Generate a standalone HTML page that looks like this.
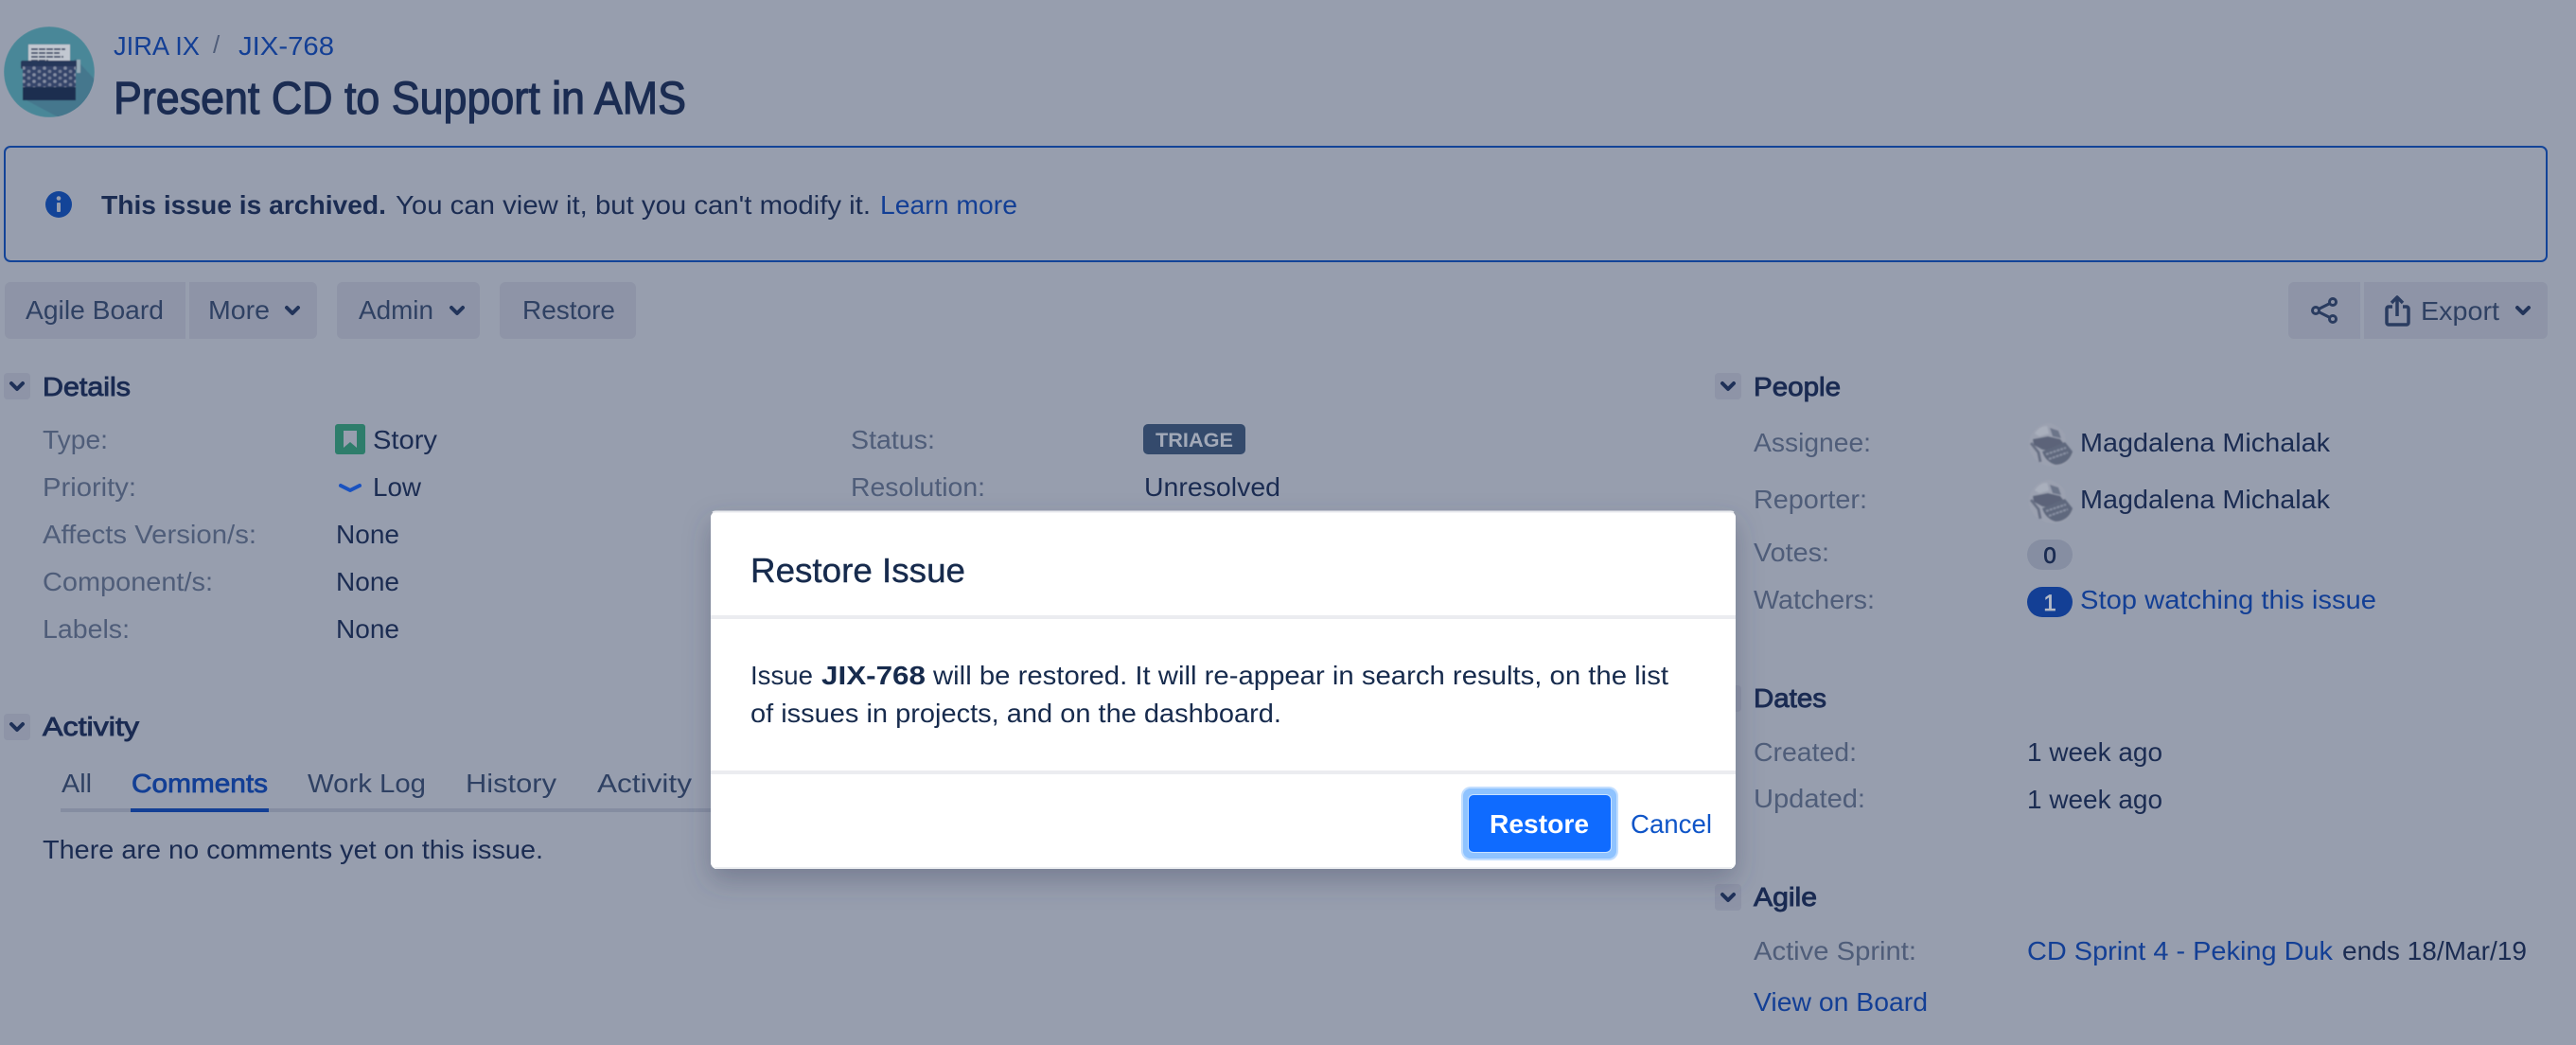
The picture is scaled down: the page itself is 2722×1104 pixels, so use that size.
<!DOCTYPE html>
<html lang="en">
<head>
<meta charset="utf-8">
<title>JIX-768 Present CD to Support in AMS</title>
<style>
html,body{margin:0;padding:0;width:2722px;height:1104px;overflow:hidden;background:#979eae}
svg{display:block}
text{font-family:"Liberation Sans",Arial,sans-serif;font-size:28px;fill:#1b2c52;white-space:pre}
.b{font-weight:700}
.l{fill:#4f5d79}
.a{fill:#133f95}
.t{fill:#2f4163}
.h{fill:#1a2b52;stroke:#1a2b52;stroke-width:.9}
.m{fill:#172b4d}
</style>
</head>
<body>
<svg xmlns="http://www.w3.org/2000/svg" width="2722" height="1104" viewBox="0 0 2722 1104">
<defs>
<filter id="blur1" x="-10%" y="-10%" width="120%" height="120%"><feGaussianBlur stdDeviation="0.9"/></filter>
<filter id="blur2" x="-10%" y="-10%" width="120%" height="120%"><feGaussianBlur stdDeviation="0.6"/></filter>
<filter id="shadow" x="-10%" y="-20%" width="120%" height="150%"><feDropShadow dx="0" dy="12" stdDeviation="14" flood-color="#3c4763" flood-opacity=".38"/></filter>
<pattern id="keys" width="11" height="7" patternUnits="userSpaceOnUse"><rect width="11" height="7" fill="#34456a"/><circle cx="3" cy="2" r="1.800" fill="#838da3"/><circle cx="8.500" cy="5.500" r="1.800" fill="#737e96"/></pattern>
<clipPath id="ava"><circle cx="52" cy="76" r="48"/></clipPath>
<g id="smallava" filter="url(#blur1)">
<path d="M2 26C1 12 12 1 24 1c8 3 12 5 16 12l1 10 7 9c-1 9-9 15-19 15C18 47 4 40 2 26z" fill="#9ba1b0"/>
<path d="M6 18l16-3 13 3 7 9-11 4-15-2-9-5z" fill="#5b6479"/>
<path d="M24 6l9 3 3 8-9-2z" fill="#6c7489"/>
<path d="M8 12c3-5 8-8 13-8l2 8-10 3z" fill="#a9afbc"/>
<path d="M16 31l24-10 8 10c-2 8-9 14-18 14-7-2-12-7-14-14z" fill="#5f687d"/>
<path d="M20 34l21-7M23 39l20-7" stroke="#8a92a4" stroke-width="2" stroke-dasharray="3 1" fill="none"/>
<path d="M4 22l8 10 2 10" stroke="#676f84" stroke-width="3" fill="none"/>
</g>
</defs>

<rect width="2722" height="1104" fill="#979eae"/>

<!-- project avatar -->
<g clip-path="url(#ava)" filter="url(#blur2)">
<circle cx="52" cy="76" r="48" fill="#4a8798"/>
<path d="M80 62L100 84V124H62L28 106z" fill="#44778d"/>
<rect x="30" y="47" width="44" height="22" fill="#c2c8d1"/>
<path d="M33 52h36M33 56h30M33 60h34M33 64h18" stroke="#4b5670" stroke-width="2" stroke-dasharray="7 1"/>
<rect x="38" y="64" width="28" height="6" fill="#d2d6dd"/>
<rect x="22" y="64" width="60" height="9" rx="2" fill="#27395a"/>
<rect x="24" y="70" width="56" height="23" fill="url(#keys)"/>
<rect x="24" y="92" width="56" height="14" fill="#1f2e50"/>
<rect x="81" y="63" width="4" height="14" fill="#94a9b6"/>
</g>

<!-- breadcrumbs and title -->
<text class="a" x="120" y="58" textLength="91" lengthAdjust="spacingAndGlyphs">JIRA IX</text>
<text class="l" x="225" y="56" style="font-size:26px">/</text>
<text class="a" x="252" y="58" textLength="101" lengthAdjust="spacingAndGlyphs">JIX-768</text>
<text x="120" y="120" style="font-size:48px;stroke:#1b2c52;stroke-width:1.200" textLength="605" lengthAdjust="spacingAndGlyphs">Present CD to Support in AMS</text>

<!-- banner -->
<rect x="5" y="155" width="2686" height="121" rx="6" fill="none" stroke="#134498" stroke-width="2"/>
<circle cx="62" cy="216" r="14" fill="#134498"/>
<rect x="60" y="214" width="4" height="10" rx="1" fill="#979eae"/>
<circle cx="62" cy="209.500" r="2.300" fill="#979eae"/>
<text class="b" x="107" y="226" textLength="301" lengthAdjust="spacingAndGlyphs">This issue is archived.</text>
<text x="418" y="226" textLength="502" lengthAdjust="spacingAndGlyphs">You can view it, but you can't modify it.</text>
<text class="a" x="930" y="226" textLength="145" lengthAdjust="spacingAndGlyphs">Learn more</text>

<!-- toolbar -->
<g fill="#8e94a7">
<path d="M11 298H196V358H11a6 6 0 0 1-6-6V304a6 6 0 0 1 6-6z"/>
<path d="M200 298H329a6 6 0 0 1 6 6V352a6 6 0 0 1-6 6H200z"/>
<rect x="356" y="298" width="151" height="60" rx="6"/>
<rect x="528" y="298" width="144" height="60" rx="6"/>
<path d="M2424 298H2494V358H2424a6 6 0 0 1-6-6V304a6 6 0 0 1 6-6z"/>
<path d="M2498 298H2686a6 6 0 0 1 6 6V352a6 6 0 0 1-6 6H2498z"/>
</g>
<text class="t" x="27" y="337" textLength="146" lengthAdjust="spacingAndGlyphs">Agile Board</text>
<text class="t" x="220" y="337" textLength="65" lengthAdjust="spacingAndGlyphs">More</text>
<path d="M303 325l6 6 6-6" fill="none" stroke="#22345a" stroke-width="4" stroke-linecap="round" stroke-linejoin="round"/>
<text class="t" x="379" y="337" textLength="79" lengthAdjust="spacingAndGlyphs">Admin</text>
<path d="M477 325l6 6 6-6" fill="none" stroke="#22345a" stroke-width="4" stroke-linecap="round" stroke-linejoin="round"/>
<text class="t" x="552" y="337" textLength="98" lengthAdjust="spacingAndGlyphs">Restore</text>
<g fill="none" stroke="#2a3c60" stroke-width="3">
<circle cx="2465" cy="319" r="3.500"/><circle cx="2447" cy="328" r="3.500"/><circle cx="2465" cy="337" r="3.500"/>
<path d="M2461 321l-10 5M2451 330l10 5"/>
</g>
<path d="M2528 324h-4a2 2 0 0 0-2 2v15a2 2 0 0 0 2 2h19a2 2 0 0 0 2-2v-15a2 2 0 0 0-2-2h-4" fill="none" stroke="#2a3c60" stroke-width="3.500"/>
<path d="M2533 334V314M2527 320l6-6 6 6" fill="none" stroke="#2a3c60" stroke-width="3.500" stroke-linejoin="round"/>
<text class="t" x="2558" y="338" textLength="83" lengthAdjust="spacingAndGlyphs">Export</text>
<path d="M2660 325l6 6 6-6" fill="none" stroke="#22345a" stroke-width="4" stroke-linecap="round" stroke-linejoin="round"/>

<!-- section toggles -->
<g fill="#8e94a7">
<rect x="4" y="394" width="28" height="28" rx="4"/>
<rect x="4" y="754" width="28" height="28" rx="4"/>
<rect x="1812" y="394" width="28" height="28" rx="4"/>
<rect x="1812" y="724" width="28" height="28" rx="4"/>
<rect x="1812" y="934" width="28" height="28" rx="4"/>
</g>
<g fill="none" stroke="#1f3158" stroke-width="4" stroke-linecap="round" stroke-linejoin="round">
<path d="M12 405l6 6 6-6"/><path d="M12 765l6 6 6-6"/><path d="M1820 405l6 6 6-6"/><path d="M1820 945l6 6 6-6"/>
</g>

<!-- details -->
<text class="h" x="45" y="418" textLength="93" lengthAdjust="spacingAndGlyphs">Details</text>
<text class="l" x="45" y="474" textLength="69" lengthAdjust="spacingAndGlyphs">Type:</text>
<text class="l" x="45" y="524" textLength="99" lengthAdjust="spacingAndGlyphs">Priority:</text>
<text class="l" x="45" y="574" textLength="226" lengthAdjust="spacingAndGlyphs">Affects Version/s:</text>
<text class="l" x="45" y="624" textLength="180" lengthAdjust="spacingAndGlyphs">Component/s:</text>
<text class="l" x="45" y="674" textLength="92" lengthAdjust="spacingAndGlyphs">Labels:</text>
<rect x="354" y="448" width="32" height="32" rx="3" fill="#2e7d6b"/>
<path d="M363 455h14v18l-7-6-7 6z" fill="#979eae"/>
<text x="394" y="474" textLength="68" lengthAdjust="spacingAndGlyphs">Story</text>
<path d="M360 513l10 5 10-5" fill="none" stroke="#1a52c0" stroke-width="4" stroke-linecap="round" stroke-linejoin="round"/>
<text x="394" y="524" textLength="51" lengthAdjust="spacingAndGlyphs">Low</text>
<text x="355" y="574" textLength="67" lengthAdjust="spacingAndGlyphs">None</text>
<text x="355" y="624" textLength="67" lengthAdjust="spacingAndGlyphs">None</text>
<text x="355" y="674" textLength="67" lengthAdjust="spacingAndGlyphs">None</text>
<text class="l" x="899" y="474" textLength="89" lengthAdjust="spacingAndGlyphs">Status:</text>
<text class="l" x="899" y="524" textLength="142" lengthAdjust="spacingAndGlyphs">Resolution:</text>
<rect x="1208" y="448" width="108" height="32" rx="5" fill="#344a6c"/>
<text class="b" x="1221" y="472" style="font-size:21px;fill:#a2a9b8" textLength="82" lengthAdjust="spacingAndGlyphs">TRIAGE</text>
<text x="1209" y="524" textLength="144" lengthAdjust="spacingAndGlyphs">Unresolved</text>

<!-- activity -->
<text class="h" x="45" y="777" textLength="102" lengthAdjust="spacingAndGlyphs">Activity</text>
<text class="t" x="65" y="837" textLength="32" lengthAdjust="spacingAndGlyphs">All</text>
<text class="a" x="139" y="837" textLength="144" lengthAdjust="spacingAndGlyphs" style="stroke:#133f95;stroke-width:.8">Comments</text>
<text class="t" x="325" y="837" textLength="125" lengthAdjust="spacingAndGlyphs">Work Log</text>
<text class="t" x="492" y="837" textLength="96" lengthAdjust="spacingAndGlyphs">History</text>
<text class="t" x="631" y="837" textLength="100" lengthAdjust="spacingAndGlyphs">Activity</text>
<rect x="64" y="854" width="700" height="4" fill="#858da1"/>
<rect x="138" y="854" width="146" height="4" fill="#133f95"/>
<text x="45" y="907" textLength="529" lengthAdjust="spacingAndGlyphs">There are no comments yet on this issue.</text>

<!-- people -->
<text class="h" x="1853" y="418" textLength="92" lengthAdjust="spacingAndGlyphs">People</text>
<text class="l" x="1853" y="477" textLength="124" lengthAdjust="spacingAndGlyphs">Assignee:</text>
<text class="l" x="1853" y="537" textLength="120" lengthAdjust="spacingAndGlyphs">Reporter:</text>
<text class="l" x="1853" y="593" textLength="80" lengthAdjust="spacingAndGlyphs">Votes:</text>
<text class="l" x="1853" y="643" textLength="128" lengthAdjust="spacingAndGlyphs">Watchers:</text>
<use href="#smallava" x="2142" y="446"/>
<use href="#smallava" x="2142" y="506"/>
<text x="2198" y="477" textLength="264" lengthAdjust="spacingAndGlyphs">Magdalena Michalak</text>
<text x="2198" y="537" textLength="264" lengthAdjust="spacingAndGlyphs">Magdalena Michalak</text>
<rect x="2142" y="570" width="48" height="32" rx="16" fill="#868ea2"/>
<text x="2166" y="595" text-anchor="middle" style="font-size:24px;stroke:#1b2c52;stroke-width:.7">0</text>
<rect x="2142" y="620" width="48" height="32" rx="16" fill="#133f95"/>
<text x="2166" y="645" text-anchor="middle" style="font-size:24px;fill:#b4bac6;stroke:#b4bac6;stroke-width:.7">1</text>
<text class="a" x="2198" y="643" textLength="313" lengthAdjust="spacingAndGlyphs">Stop watching this issue</text>

<!-- dates -->
<text class="h" x="1853" y="747" textLength="77" lengthAdjust="spacingAndGlyphs">Dates</text>
<text class="l" x="1853" y="804" textLength="109" lengthAdjust="spacingAndGlyphs">Created:</text>
<text class="l" x="1853" y="853" textLength="118" lengthAdjust="spacingAndGlyphs">Updated:</text>
<text x="2142" y="804" textLength="143" lengthAdjust="spacingAndGlyphs">1 week ago</text>
<text x="2142" y="854" textLength="143" lengthAdjust="spacingAndGlyphs">1 week ago</text>

<!-- agile -->
<text class="h" x="1853" y="957" textLength="67" lengthAdjust="spacingAndGlyphs">Agile</text>
<text class="l" x="1853" y="1014" textLength="172" lengthAdjust="spacingAndGlyphs">Active Sprint:</text>
<text class="a" x="2142" y="1014" textLength="323" lengthAdjust="spacingAndGlyphs">CD Sprint 4 - Peking Duk</text>
<text x="2475" y="1014" textLength="195" lengthAdjust="spacingAndGlyphs">ends 18/Mar/19</text>
<text class="a" x="1853" y="1068" textLength="184" lengthAdjust="spacingAndGlyphs">View on Board</text>

<!-- modal -->
<rect x="751" y="540" width="1083" height="378" rx="7" fill="#fff" filter="url(#shadow)"/>
<rect x="751" y="540" width="1083" height="378" rx="7" fill="#fff"/>
<path d="M753 541.500a6 6 0 0 1 4-1H1828a6 6 0 0 1 4 1" fill="none" stroke="#e8eaee" stroke-width="2"/>
<path d="M755 917H1830" stroke="#eceef1" stroke-width="2"/>
<text class="m" x="793" y="615" style="font-size:36px;stroke:#172b4d;stroke-width:.4" textLength="227" lengthAdjust="spacingAndGlyphs">Restore Issue</text>
<rect x="751" y="650" width="1083" height="4" fill="#ebecf0"/>
<text class="m" x="793" y="723" textLength="66" lengthAdjust="spacingAndGlyphs">Issue</text>
<text class="m b" x="868" y="723" textLength="110" lengthAdjust="spacingAndGlyphs">JIX-768</text>
<text class="m" x="986" y="723" textLength="777" lengthAdjust="spacingAndGlyphs">will be restored. It will re-appear in search results, on the list</text>
<text class="m" x="793" y="763" textLength="561" lengthAdjust="spacingAndGlyphs">of issues in projects, and on the dashboard.</text>
<rect x="751" y="814" width="1083" height="4" fill="#ebecf0"/>
<rect x="1544" y="831" width="166" height="78" rx="10" fill="#c2deff"/>
<rect x="1546" y="833" width="162" height="74" rx="8" fill="#8fc3ff"/>
<rect x="1551" y="839" width="152" height="62" rx="6" fill="#c7e1ff"/>
<rect x="1552" y="840" width="150" height="60" rx="5" fill="#0f6bff"/>
<text class="b" x="1574" y="880" style="fill:#fff" textLength="105" lengthAdjust="spacingAndGlyphs">Restore</text>
<text x="1723" y="880" style="fill:#0f55c8" textLength="86" lengthAdjust="spacingAndGlyphs">Cancel</text>
</svg>
</body>
</html>
